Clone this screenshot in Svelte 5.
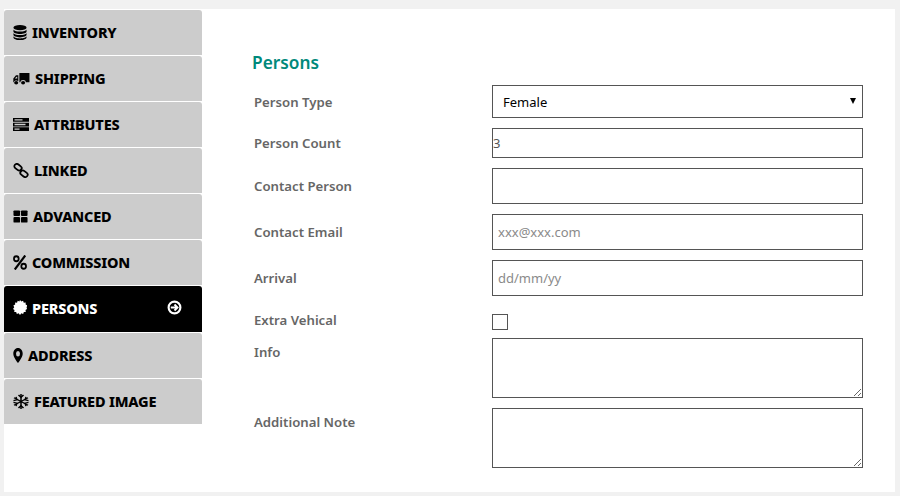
<script lang="ts">
    const tabs = [
        { name: "INVENTORY", icon: "database", width: 14 },
        { name: "SHIPPING", icon: "truck", width: 17 },
        { name: "ATTRIBUTES", icon: "tasks", width: 16 },
        { name: "LINKED", icon: "link", width: 16 },
        { name: "ADVANCED", icon: "grid", width: 15 },
        { name: "COMMISSION", icon: "percent", width: 14 },
        { name: "PERSONS", icon: "badge", width: 14, active: true },
        { name: "ADDRESS", icon: "marker", width: 10 },
        { name: "FEATURED IMAGE", icon: "snow", width: 16 },
    ];
</script>

{#snippet icon(kind: string, width: number)}
    <svg class="icon" style="width: {width}px" viewBox="0 0 16 16" preserveAspectRatio="none" aria-hidden="true">
        {#if kind === "database"}
            <ellipse cx="8" cy="2.800" rx="7.500" ry="2.800" />
            <path d="M.5 4.500v2.300c0 1.500 3.400 2.700 7.500 2.700s7.500-1.200 7.500-2.700V4.500C15.500 6 12 7 8 7S.5 6 .5 4.500Z" />
            <path d="M.5 8.200v2.300c0 1.500 3.400 2.700 7.500 2.700s7.500-1.200 7.500-2.700V8.200c0 1.500-3.500 2.500-7.500 2.500S.5 9.700.5 8.200Z" />
            <path d="M.5 11.800v1.400C.5 14.700 3.900 16 8 16s7.500-1.300 7.500-2.800v-1.400c0 1.500-3.500 2.500-7.500 2.500S.5 13.300.5 11.800Z" />
        {:else if kind === "truck"}
            <path d="M6 2h9.500v10H12a2.500 2.500 0 0 0-5 0H6V2Z" />
            <path d="M5 4.500H2.800L.3 8v4h.4a2.500 2.500 0 0 1 4.300-1V4.500ZM1.700 8l1.600-2H4v2H1.700Z" fill-rule="evenodd" />
            <circle cx="3" cy="12.500" r="1.900" />
            <circle cx="9.500" cy="12.500" r="1.900" />
        {:else if kind === "tasks"}
            <path d="M0 1h16v4H0V1Zm1.500 1.300v1.400h8V2.300h-8ZM0 6h16v4H0V6Zm1.500 1.300v1.400h11V7.300h-11ZM0 11h16v4H0v-4Zm1.500 1.300v1.400h5v-1.400h-5Z" fill-rule="evenodd" />
        {:else if kind === "link"}
            <g fill="none" stroke="currentColor" stroke-width="1.800">
                <rect x="1" y="2" width="8" height="5" rx="2.500" transform="rotate(40 5 4.500)" />
                <rect x="7" y="9" width="8" height="5" rx="2.500" transform="rotate(40 11 11.500)" />
            </g>
        {:else if kind === "grid"}
            <rect x=".5" y="1.500" width="7" height="6" rx="1" />
            <rect x="8.500" y="1.500" width="7" height="6" rx="1" />
            <rect x=".5" y="8.500" width="7" height="6" rx="1" />
            <rect x="8.500" y="8.500" width="7" height="6" rx="1" />
        {:else if kind === "percent"}
            <g fill="none" stroke="currentColor">
                <circle cx="3.800" cy="4" r="2.700" stroke-width="2" />
                <circle cx="12.200" cy="12" r="2.700" stroke-width="2" />
                <path d="M14 .5 2 15.500" stroke-width="2.400" />
            </g>
        {:else if kind === "badge"}
            <path d="M8 0l1.600 1.700L11.500.8l.8 2.100 2.200-.2-.1 2.200 2.100.9-1 1.900L16 9.500l-1.700 1.100.3 2.200-2.200.1-.8 2.100-2.100-.8L8 16l-1.500-1.800-2.100.8-.8-2.100-2.200-.1.300-2.200L0 9.500l1.400-1.800-1-1.900 2.100-.9-.1-2.200 2.200.2L5.400.8l1.900.9L8 0Z" />
        {:else if kind === "marker"}
            <path d="M8 0C3.500 0 .5 2.700.5 6c0 3.500 5 7.500 7.500 10 2.500-2.500 7.500-6.500 7.500-10C15.500 2.700 12.500 0 8 0Zm0 3.200a3.200 2.900 0 1 1 0 5.800 3.200 2.900 0 0 1 0-5.800Z" fill-rule="evenodd" />
        {:else if kind === "snow"}
            <g fill="none" stroke="currentColor" stroke-width="1.500">
                <path d="M8 0v16M1 4l14 8M15 4 1 12" />
                <path d="M5.500 1 8 3.500 10.500 1M5.500 15 8 12.500l2.500 2.500M.5 7 3.800 6.200 3 3M15.500 7l-3.300-.8.800-3.200M.5 9l3.300.8L3 13M15.500 9l-3.300.8.800 3.200" />
            </g>
        {/if}
    </svg>
{/snippet}

<div class="page">
    <div class="panel">
        <nav class="sidebar">
            {#each tabs as tab}
                <div class="tab" class:active={tab.active}>
                    {@render icon(tab.icon, tab.width)}
                    <span>{tab.name}</span>
                    {#if tab.active}
                        <svg class="arrow" viewBox="0 0 14 14" aria-hidden="true">
                            <circle cx="7" cy="7" r="5.500" fill="none" stroke="currentColor" stroke-width="2" />
                            <path d="M3.500 7h6M7 4.200 9.800 7 7 9.800" fill="none" stroke="currentColor" stroke-width="1.800" />
                        </svg>
                    {/if}
                </div>
            {/each}
        </nav>

        <form class="form">
            <h2>Persons</h2>
            <div class="row select-row">
                <label for="type">Person Type</label>
                <div class="select" id="type">Female<span class="caret"></span></div>
            </div>
            <div class="row short">
                <label for="count">Person Count</label>
                <input id="count" type="text" value="3" />
            </div>
            <div class="row">
                <label for="contact">Contact Person</label>
                <input id="contact" type="text" />
            </div>
            <div class="row">
                <label for="email">Contact Email</label>
                <input id="email" type="text" placeholder="xxx@xxx.com" />
            </div>
            <div class="row">
                <label for="arrival">Arrival</label>
                <input id="arrival" type="text" placeholder="dd/mm/yy" />
            </div>
            <div class="row check-row">
                <label for="extra">Extra Vehical</label>
                <input id="extra" type="checkbox" />
            </div>
            <div class="row area-row">
                <label for="info">Info</label>
                <textarea id="info"></textarea>
            </div>
            <div class="row area-row">
                <label for="note">Additional Note</label>
                <textarea id="note"></textarea>
            </div>
        </form>
    </div>
</div>

<style>
    :global(body) {
        background: #f1f1f1;
        font-family: "Noto Sans", "Open Sans", sans-serif;
    }

    .page {
        height: 496px;
        padding: 9px 5px 4px 4px;
        box-sizing: border-box;
    }

    .panel {
        display: flex;
        height: 483px;
        background: #fff;
    }

    .sidebar {
        width: 198px;
        padding-top: 1px;
        flex-shrink: 0;
    }

    .tab {
        display: flex;
        align-items: center;
        gap: 5px;
        height: 45px;
        margin-bottom: 1px;
        padding: 0 0 1px 9px;
        box-sizing: border-box;
        background: #cccccc;
        border-radius: 3px 3px 0 0;
        color: #000;
        font-size: 14.5px;
        font-weight: 800;
        letter-spacing: -0.2px;
    }

    .tab.active {
        height: 46px;
        padding-bottom: 3px;
        background: #000;
        color: #fff;
    }

    .icon {
        height: 15px;
        fill: currentColor;
        flex-shrink: 0;
    }

    .arrow {
        width: 15px;
        height: 15px;
        margin-left: auto;
        margin-right: 20px;
    }

    .form {
        margin-left: 50px;
        width: 611px;
    }

    h2 {
        margin: 0;
        height: 76px;
        padding-top: 43px;
        box-sizing: border-box;
        color: #00897b;
        font-size: 17.3px;
        font-weight: 600;
        line-height: 22px;
    }

    .row {
        display: flex;
        align-items: center;
        height: 36px;
        margin-bottom: 10px;
    }

    .select-row {
        height: 33px;
    }

    .short {
        height: 30px;
    }

    .check-row {
        height: 16px;
        margin-top: 18px;
        margin-bottom: 8px;
    }

    .check-row label {
        padding-bottom: 4px;
    }

    .area-row {
        height: 60px;
        align-items: flex-start;
    }

    .area-row label {
        padding-top: 5px;
    }

    label {
        width: 240px;
        padding-left: 2px;
        box-sizing: border-box;
        flex-shrink: 0;
        color: #666;
        font-size: 13.2px;
        font-weight: 600;
    }

    .select,
    input[type="text"],
    textarea {
        width: 371px;
        height: 100%;
        box-sizing: border-box;
        border: 1px solid #555;
        border-radius: 0;
        margin: 0;
        background: #fff;
        font-family: inherit;
        font-size: 13px;
        outline: none;
    }

    .select {
        display: flex;
        align-items: center;
        justify-content: space-between;
        padding: 0 6px 0 10px;
        color: #000;
    }

    .caret {
        width: 0;
        height: 0;
        margin-bottom: 2px;
        border-left: 3px solid transparent;
        border-right: 3px solid transparent;
        border-top: 6px solid #000;
    }

    input[type="text"] {
        padding: 0 5px;
        color: #555;
    }

    .short input {
        padding: 0;
    }

    input::placeholder {
        color: #8a8a8a;
    }

    input[type="checkbox"] {
        appearance: none;
        width: 16px;
        height: 16px;
        margin: 0;
        border: 1px solid #555;
        background: #fff;
    }

    textarea {
        display: block;
        padding: 5px;
    }
</style>
